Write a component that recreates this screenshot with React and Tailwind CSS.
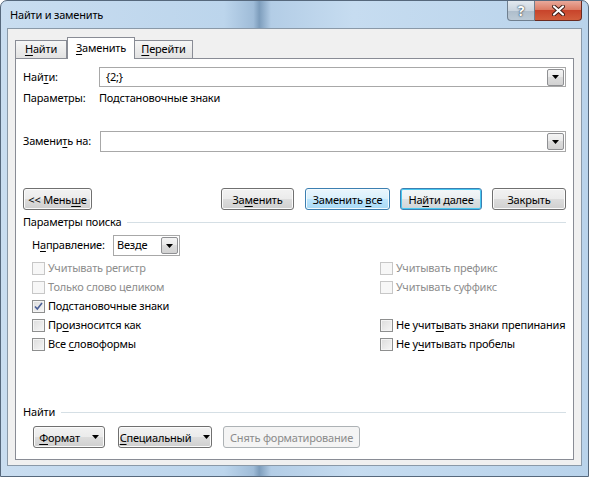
import React from "react";

const font = { fontFamily: '"Noto Sans", "Open Sans", sans-serif' };

const btnBase =
  "h-[22px] rounded-[3px] border text-[11px] flex items-center justify-center leading-none whitespace-nowrap";
const btnNormal =
  "border-[#707070] text-black bg-[linear-gradient(#f2f2f2_0%,#ebebeb_49%,#dddddd_50%,#cfcfcf_100%)] shadow-[inset_0_0_0_1px_#fbfbfb]";
const btnHover =
  "border-[#3c7fb1] text-black bg-[linear-gradient(#eaf6fd_0%,#d9f0fc_49%,#bee6fd_50%,#a7d9f5_100%)] shadow-[inset_0_0_0_1px_#f4fbfe]";
const btnDefault =
  "border-[#3c7fb1] text-black bg-[linear-gradient(#f3f7f9_0%,#ebeff1_49%,#dde2e4_50%,#cfd5d8_100%)] shadow-[inset_0_0_0_1px_#48c8f1]";
const btnDisabled = "border-[#adb2b5] text-[#8b8b8b] bg-[#f4f4f4]";

const U = ({ children }) => <span className="underline underline-offset-2">{children}</span>;

function Arrow() {
  return (
    <svg width={7} height={4} viewBox="0 0 7 4" className="shrink-0">
      <path d="M0 0h7L3.5 4z" fill="#000" />
    </svg>
  );
}

function DropButton() {
  return (
    <div className="w-[17px] h-[17px] border border-[#8f9093] rounded-[2px] flex items-center justify-center bg-[linear-gradient(#f4f4f4_0%,#e9e9e9_49%,#dcdcdc_50%,#d2d2d2_100%)]">
      <Arrow />
    </div>
  );
}

function Combo({ value, className }) {
  return (
    <div
      className={`border border-[#a8a8a8] bg-white flex items-center justify-between pr-px ${className}`}
    >
      <span className="text-[11px] text-black">{value}</span>
      <DropButton />
    </div>
  );
}

function CheckBox({ checked, disabled }) {
  return (
    <div
      className={`w-[13px] h-[13px] shrink-0 border flex items-center justify-center ${
        disabled
          ? "border-[#c7c7c7] bg-[#f7f7f7]"
          : "border-[#8e8f8f] bg-[linear-gradient(135deg,#dcdcdc_0%,#f6f6f6_100%)] shadow-[inset_0_0_0_1px_#f4f4f4]"
      }`}
    >
      {checked && (
        <svg width="9" height="9" viewBox="0 0 9 9">
          <path d="M1 4.5l2.3 2.6L8 1" fill="none" stroke="#4a5f97" strokeWidth="1.6" />
        </svg>
      )}
    </div>
  );
}

function Option({ checked, disabled, children }) {
  return (
    <div className="h-[19px] flex items-center gap-[3px] whitespace-nowrap">
      <CheckBox checked={checked} disabled={disabled} />
      <span className={`text-[11px] ${disabled ? "text-[#8d8d8d]" : "text-black"}`}>
        {children}
      </span>
    </div>
  );
}

function Section({ title }) {
  return (
    <div className="h-[14px] flex items-center gap-[6px]">
      <span className="text-[11px] text-black whitespace-nowrap">{title}</span>
      <div className="flex-1 h-px bg-[#d5dfe5]" />
    </div>
  );
}

export default function App() {
  return (
    <div style={font} className="w-[589px] h-[477px] overflow-hidden tracking-[-0.2px]">
      <div className="h-full rounded-t-[7px] border border-[#56687c] flex flex-col bg-[linear-gradient(90deg,#c9ddf0_0%,#bcd5ec_38%,#9fbcd8_43%,#7d9dbc_44%,#b3cde6_46%,#c6dcf0_60%,#b9d3eb_100%)]">
        {/* title bar */}
        <div className="h-[27px] flex items-start justify-between">
          <span className="pl-[9px] pt-[6px] text-[11px] text-black">Найти и заменить</span>
          <div className="flex mr-[6px]">
            <div className="w-[28px] h-[20px] rounded-bl-[4px] border border-t-0 border-[#6f7f8f] flex items-center justify-center bg-[linear-gradient(#e3e9ef_0%,#cad5df_50%,#aebdcb_51%,#bccad6_100%)]">
              <span className="text-[14px] font-bold text-white leading-none [text-shadow:0_0_2px_#2a3b4b,0_0_1px_#2a3b4b]">
                ?
              </span>
            </div>
            <div className="w-[47px] h-[20px] rounded-br-[4px] border border-t-0 border-l-0 border-[#6a2a20] flex items-center justify-center bg-[linear-gradient(#e9a99b_0%,#dc7d66_45%,#c8442b_50%,#d25e3c_100%)]">
              <svg width="13" height="11" viewBox="0 0 13 11">
                <path d="M2 1.5l9 8M11 1.5l-9 8" stroke="#3b1a14" strokeWidth="4" strokeLinecap="round" />
                <path d="M2 1.5l9 8M11 1.5l-9 8" stroke="#fff" strokeWidth="2.2" strokeLinecap="round" />
              </svg>
            </div>
          </div>
        </div>

        {/* client area */}
        <div className="mx-[6px] h-[438px] border border-[#8a99a8] bg-[#f0f0f0] flex flex-col">
          {/* tabs */}
          <div className="pt-[8px] pl-[7px] flex items-end text-[11px]">
            <div className="w-[52px] h-[18px] border border-b-0 border-[#898c95] bg-[linear-gradient(#f6f6f6,#e2e2e2)] flex items-center justify-center">
              <span>
                <U>Н</U>айти
              </span>
            </div>
            <div className="w-[68px] h-[22px] -mb-px relative z-10 border border-b-0 border-[#898c95] bg-white flex items-center justify-center">
              <span>
                <U>З</U>аменить
              </span>
            </div>
            <div className="w-[58px] h-[18px] border border-b-0 border-l-0 border-[#898c95] bg-[linear-gradient(#f6f6f6,#e2e2e2)] flex items-center justify-center">
              <span>
                <U>П</U>ерейти
              </span>
            </div>
          </div>

          {/* tab page */}
          <div className="mx-[7px] h-[402px] border border-[#898c95] bg-white px-[7px] flex flex-col text-[11px] text-black whitespace-nowrap">
            <div className="mt-[8px] h-[20px] flex items-center">
              <span className="w-[76px]">
                Най<U>т</U>и:
              </span>
              <Combo value="{2;}" className="flex-1 h-[20px] pl-[6px]" />
            </div>
            <div className="mt-[3px] h-[16px] flex items-center">
              <span className="w-[76px]">Параметры:</span>
              <span>Подстановочные знаки</span>
            </div>

            <div className="mt-[25px] h-[21px] flex items-center">
              <span className="w-[77px]">
                Замени<U>т</U>ь на:
              </span>
              <Combo value="" className="flex-1 h-[21px]" />
            </div>

            <div className="mt-[36px] flex items-center">
              <div className={`${btnBase} ${btnNormal} w-[69px]`}>
                &lt;&lt; Мень<U>ш</U>е
              </div>
              <div className="flex-1" />
              <div className={`${btnBase} ${btnNormal} w-[73px]`}>
                За<U>м</U>енить
              </div>
              <div className={`${btnBase} ${btnHover} w-[85px] ml-[11px]`}>
                Заменить&nbsp;<U>в</U>се
              </div>
              <div className={`${btnBase} ${btnDefault} w-[82px] ml-[10px]`}>
                На<U>й</U>ти далее
              </div>
              <div className={`${btnBase} ${btnNormal} w-[74px] ml-[10px]`}>Закрыть</div>
            </div>

            <div className="mt-[5px]">
              <Section title="Параметры поиска" />
            </div>

            <div className="mt-[6px] ml-[9px] h-[21px] flex items-center">
              <span className="w-[81px]">
                Н<U>а</U>правление:
              </span>
              <Combo value="Везде" className="w-[67px] h-[21px] pl-[3px]" />
            </div>

            <div className="mt-[3px] ml-[9px] grid grid-cols-[348px_1fr]">
              <div className="flex flex-col">
                <Option disabled>Учитывать регистр</Option>
                <Option disabled>Только слово целиком</Option>
                <Option checked>Подстановочные знаки</Option>
                <Option>
                  Пр<U>о</U>износится как
                </Option>
                <Option>
                  Все <U>с</U>ловоформы
                </Option>
              </div>
              <div className="flex flex-col">
                <Option disabled>Учитывать префикс</Option>
                <Option disabled>Учитывать суффикс</Option>
                <div className="h-[19px]" />
                <Option>
                  Не учит<U>ы</U>вать знаки препинания
                </Option>
                <Option>
                  Не у<U>ч</U>итывать пробелы
                </Option>
              </div>
            </div>

            <div className="mt-[51px]">
              <Section title="Найти" />
            </div>

            <div className="mt-[7px] ml-[10px] flex items-center">
              <div className={`${btnBase} ${btnNormal} w-[72px] h-[20px] gap-[12px]`}>
                <span>
                  <U>Ф</U>ормат
                </span>
                <Arrow />
              </div>
              <div className={`${btnBase} ${btnNormal} w-[94px] h-[20px] gap-[12px] ml-[13px]`}>
                <span>
                  <U>С</U>пециальный
                </span>
                <Arrow />
              </div>
              <div className={`${btnBase} ${btnDisabled} w-[137px] h-[21px] ml-[11px]`}>
                Снять форматирование
              </div>
            </div>
          </div>
        </div>
      </div>
    </div>
  );
}
